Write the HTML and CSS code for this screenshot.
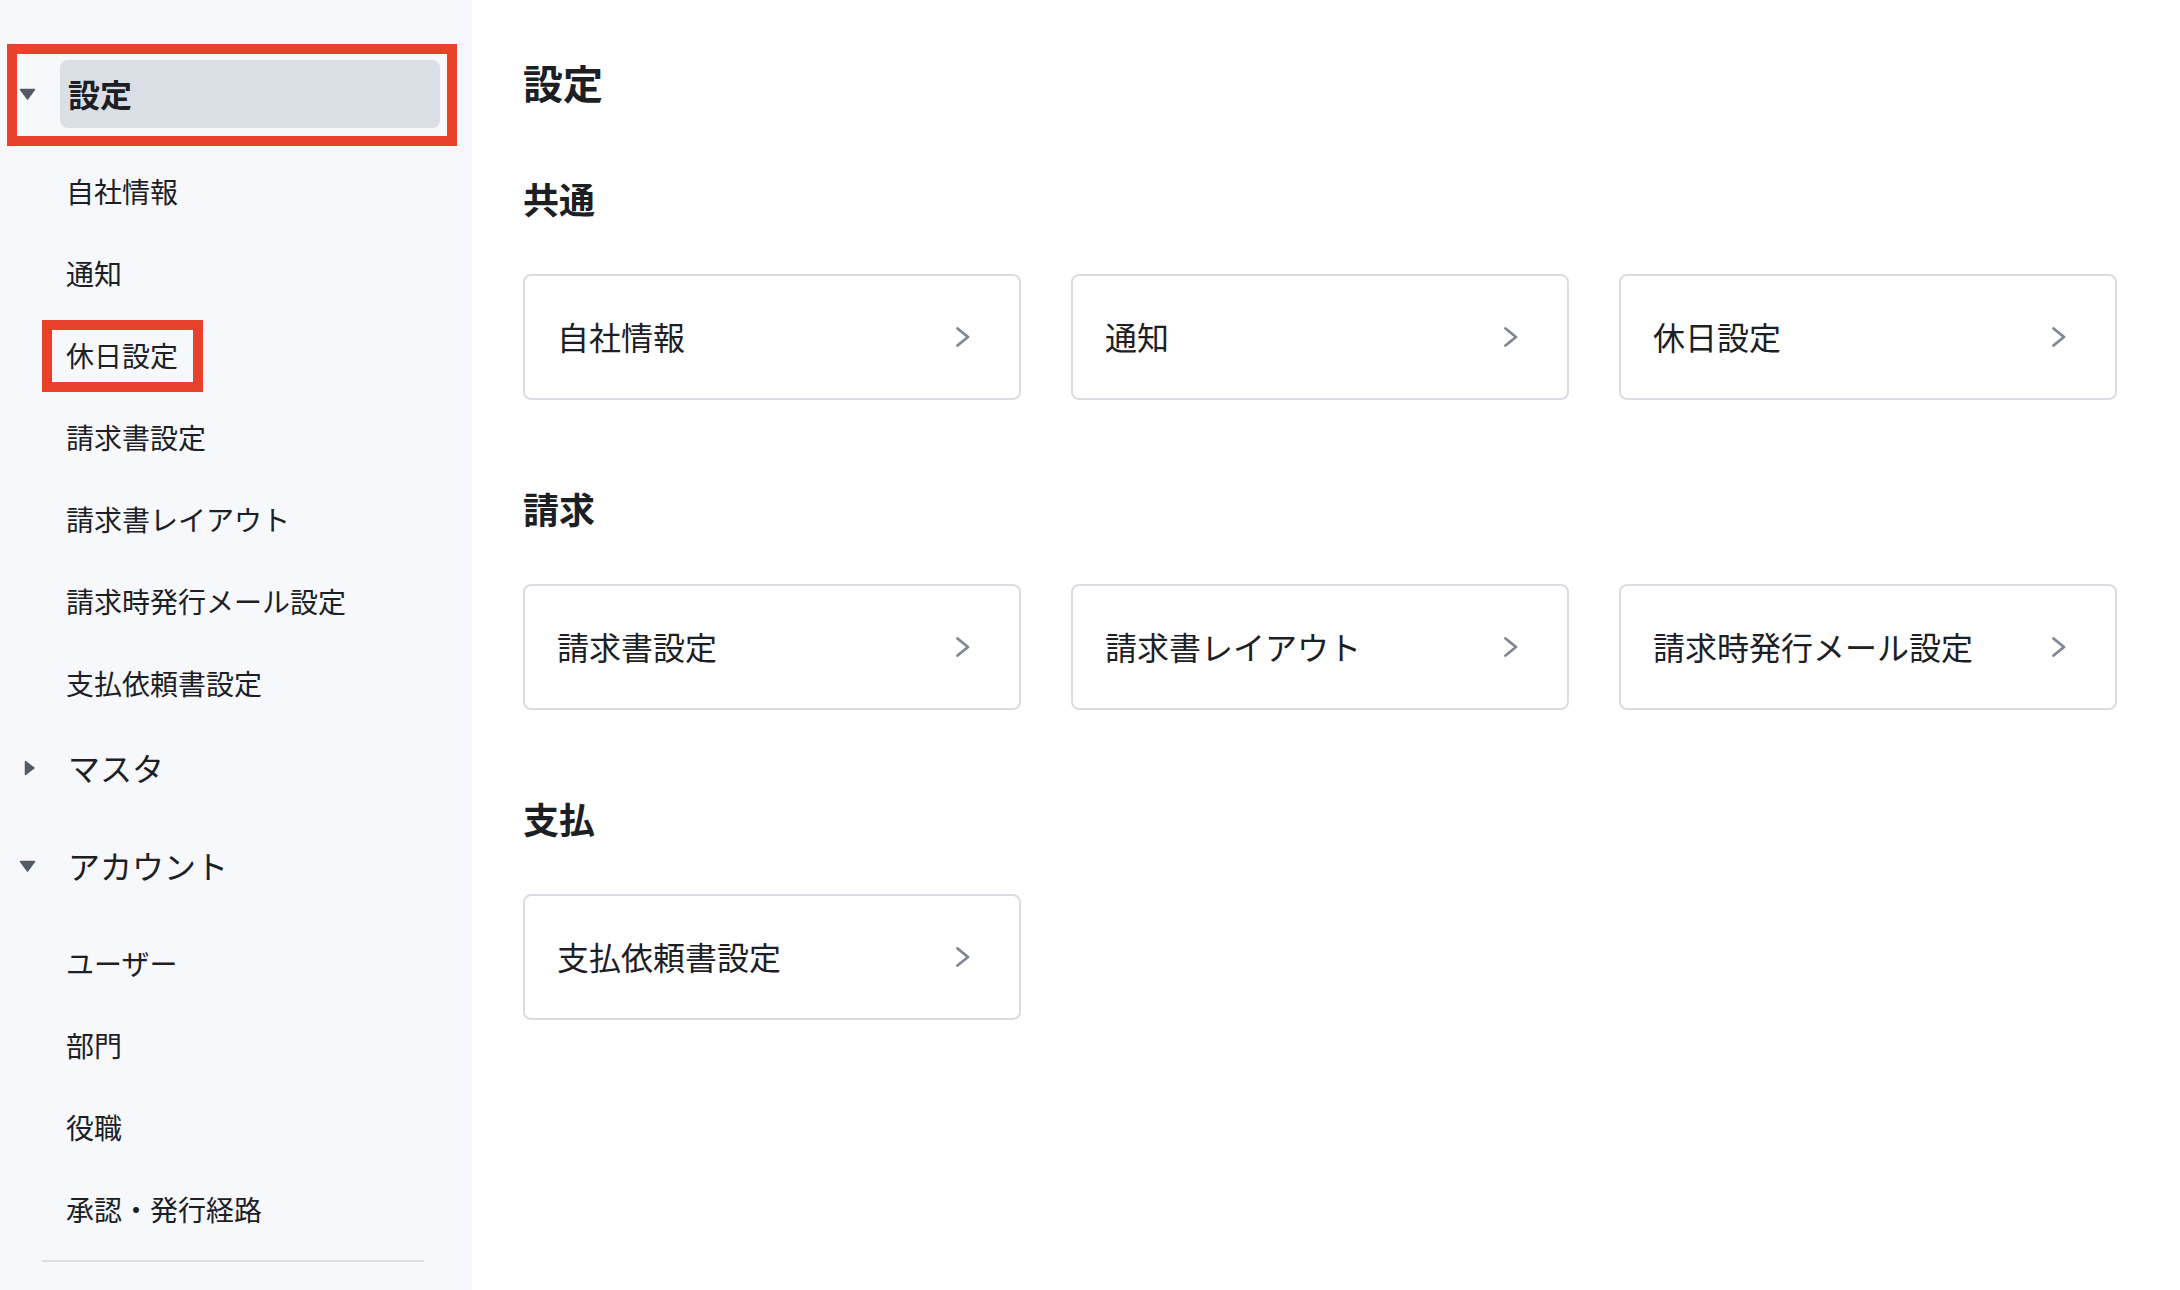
FILE: index.html
```html
<!DOCTYPE html>
<html lang="ja">
<head>
<meta charset="utf-8">
<title>設定</title>
<link rel="stylesheet" href="styles.css">
</head>
<body>
<aside class="sidebar">
  <div class="nav-group">
    <div class="nav-head active marked">
      <span class="caret"><svg width="17" height="12" viewBox="0 0 17 12"><path d="M1.5 1.5 L15.5 1.5 L8.5 11 Z" fill="#525b67" stroke="#525b67" stroke-width="1.5" stroke-linejoin="round"/></svg></span>
      <span class="nav-label">設定</span>
    </div>
    <ul class="nav-sub">
      <li class="nav-item">自社情報</li>
      <li class="nav-item">通知</li>
      <li class="nav-item marked-item">休日設定</li>
      <li class="nav-item">請求書設定</li>
      <li class="nav-item">請求書レイアウト</li>
      <li class="nav-item">請求時発行メール設定</li>
      <li class="nav-item">支払依頼書設定</li>
    </ul>
  </div>
  <div class="nav-group collapsed">
    <div class="nav-head">
      <span class="caret caret-right"><svg width="11" height="16" viewBox="0 0 11 16"><path d="M1.5 1.5 L10 8 L1.5 14.5 Z" fill="#525b67" stroke="#525b67" stroke-width="1.5" stroke-linejoin="round"/></svg></span>
      <span class="nav-label">マスタ</span>
    </div>
  </div>
  <div class="nav-group">
    <div class="nav-head">
      <span class="caret"><svg width="17" height="12" viewBox="0 0 17 12"><path d="M1.5 1.5 L15.5 1.5 L8.5 11 Z" fill="#525b67" stroke="#525b67" stroke-width="1.5" stroke-linejoin="round"/></svg></span>
      <span class="nav-label">アカウント</span>
    </div>
    <ul class="nav-sub">
      <li class="nav-item">ユーザー</li>
      <li class="nav-item">部門</li>
      <li class="nav-item">役職</li>
      <li class="nav-item">承認・発行経路</li>
    </ul>
  </div>
  <div class="nav-divider"></div>
</aside>
<main class="main">
  <h1 class="page-title">設定</h1>
  <section class="section">
    <h2 class="section-title">共通</h2>
    <div class="card-grid">
      <a class="card"><span>自社情報</span><svg class="chev" width="16" height="22" viewBox="0 0 16 22"><path d="M2.5 2.5 L13 11 L2.5 19.5" fill="none" stroke="#7d8692" stroke-width="2.8" stroke-linecap="round" stroke-linejoin="round"/></svg></a>
      <a class="card"><span>通知</span><svg class="chev" width="16" height="22" viewBox="0 0 16 22"><path d="M2.5 2.5 L13 11 L2.5 19.5" fill="none" stroke="#7d8692" stroke-width="2.8" stroke-linecap="round" stroke-linejoin="round"/></svg></a>
      <a class="card"><span>休日設定</span><svg class="chev" width="16" height="22" viewBox="0 0 16 22"><path d="M2.5 2.5 L13 11 L2.5 19.5" fill="none" stroke="#7d8692" stroke-width="2.8" stroke-linecap="round" stroke-linejoin="round"/></svg></a>
    </div>
  </section>
  <section class="section">
    <h2 class="section-title">請求</h2>
    <div class="card-grid">
      <a class="card"><span>請求書設定</span><svg class="chev" width="16" height="22" viewBox="0 0 16 22"><path d="M2.5 2.5 L13 11 L2.5 19.5" fill="none" stroke="#7d8692" stroke-width="2.8" stroke-linecap="round" stroke-linejoin="round"/></svg></a>
      <a class="card"><span>請求書レイアウト</span><svg class="chev" width="16" height="22" viewBox="0 0 16 22"><path d="M2.5 2.5 L13 11 L2.5 19.5" fill="none" stroke="#7d8692" stroke-width="2.8" stroke-linecap="round" stroke-linejoin="round"/></svg></a>
      <a class="card"><span>請求時発行メール設定</span><svg class="chev" width="16" height="22" viewBox="0 0 16 22"><path d="M2.5 2.5 L13 11 L2.5 19.5" fill="none" stroke="#7d8692" stroke-width="2.8" stroke-linecap="round" stroke-linejoin="round"/></svg></a>
    </div>
  </section>
  <section class="section">
    <h2 class="section-title">支払</h2>
    <div class="card-grid">
      <a class="card"><span>支払依頼書設定</span><svg class="chev" width="16" height="22" viewBox="0 0 16 22"><path d="M2.5 2.5 L13 11 L2.5 19.5" fill="none" stroke="#7d8692" stroke-width="2.8" stroke-linecap="round" stroke-linejoin="round"/></svg></a>
    </div>
  </section>
</main>
</body>
</html>
```
FILE: styles.css
```css
*, *::before, *::after { box-sizing: border-box; }

html, body {
  margin: 0;
  padding: 0;
  background: #ffffff;
}

body {
  display: flex;
  min-height: 100vh;
  font-family: "Noto Sans CJK JP", "Noto Sans", sans-serif;
  color: #1c2025;
}

/* Sidebar */
.sidebar {
  width: 472px;
  flex-shrink: 0;
  background: #f6f8fb;
  padding-top: 60px;
}

.nav-group {
  margin-bottom: 9px;
}

.nav-group.collapsed {
  margin-bottom: 30px;
}

.nav-head {
  position: relative;
  display: flex;
  align-items: center;
  height: 68px;
  padding: 0 32px 0 19px;
}

.caret {
  width: 17px;
  height: 17px;
  margin-right: 24px;
  display: flex;
  align-items: center;
  justify-content: flex-start;
  flex-shrink: 0;
}

.caret svg { display: block; }

.caret-right {
  padding-left: 5px;
}

.nav-label {
  flex: 1;
  height: 68px;
  display: flex;
  align-items: center;
  padding-left: 8px;
  padding-bottom: 2px;
  border-radius: 8px;
  font-size: 32px;
  line-height: 1;
  color: #1c2025;
}

.nav-head.active .nav-label {
  background: #dadee5;
  font-weight: 700;
}

.nav-head.marked::after {
  content: "";
  position: absolute;
  left: 7px;
  top: -16px;
  width: 450px;
  height: 102px;
  border: 10px solid #e8412c;
  pointer-events: none;
}

.nav-sub {
  list-style: none;
  margin: 23px 0 0 0;
  padding: 0;
}

.nav-item {
  position: relative;
  height: 82px;
  display: flex;
  align-items: center;
  padding-left: 66px;
  padding-bottom: 3px;
  font-size: 28px;
  line-height: 1;
  color: #1c2025;
}

.nav-item.marked-item::after {
  content: "";
  position: absolute;
  left: 42px;
  top: 5px;
  width: 161px;
  height: 72px;
  border: 10px solid #e8412c;
  pointer-events: none;
}

.nav-divider {
  height: 2px;
  background: #dcdfe4;
  margin: 2px 48px 0 42px;
}

/* Main */
.main {
  flex: 1;
  padding: 54px 63px 0 51px;
}

.page-title {
  margin: 0 0 63px 0;
  font-size: 40px;
  line-height: 56px;
  font-weight: 700;
  color: #1c2025;
}

.section + .section {
  margin-top: 83px;
}

.section-title {
  margin: 0 0 51px 0;
  font-size: 36px;
  line-height: 50px;
  font-weight: 700;
  color: #1c2025;
}

.card-grid {
  display: grid;
  grid-template-columns: repeat(3, 1fr);
  gap: 50px;
}

.card {
  height: 126px;
  display: flex;
  align-items: center;
  justify-content: space-between;
  padding: 0 48px 0 32px;
  border: 2px solid #d9dde3;
  border-radius: 8px;
  background: #ffffff;
  font-size: 32px;
  line-height: 1;
  color: #1c2025;
  text-decoration: none;
}

.card span {
  padding-bottom: 3px;
}

.chev {
  display: block;
  flex-shrink: 0;
}
```
